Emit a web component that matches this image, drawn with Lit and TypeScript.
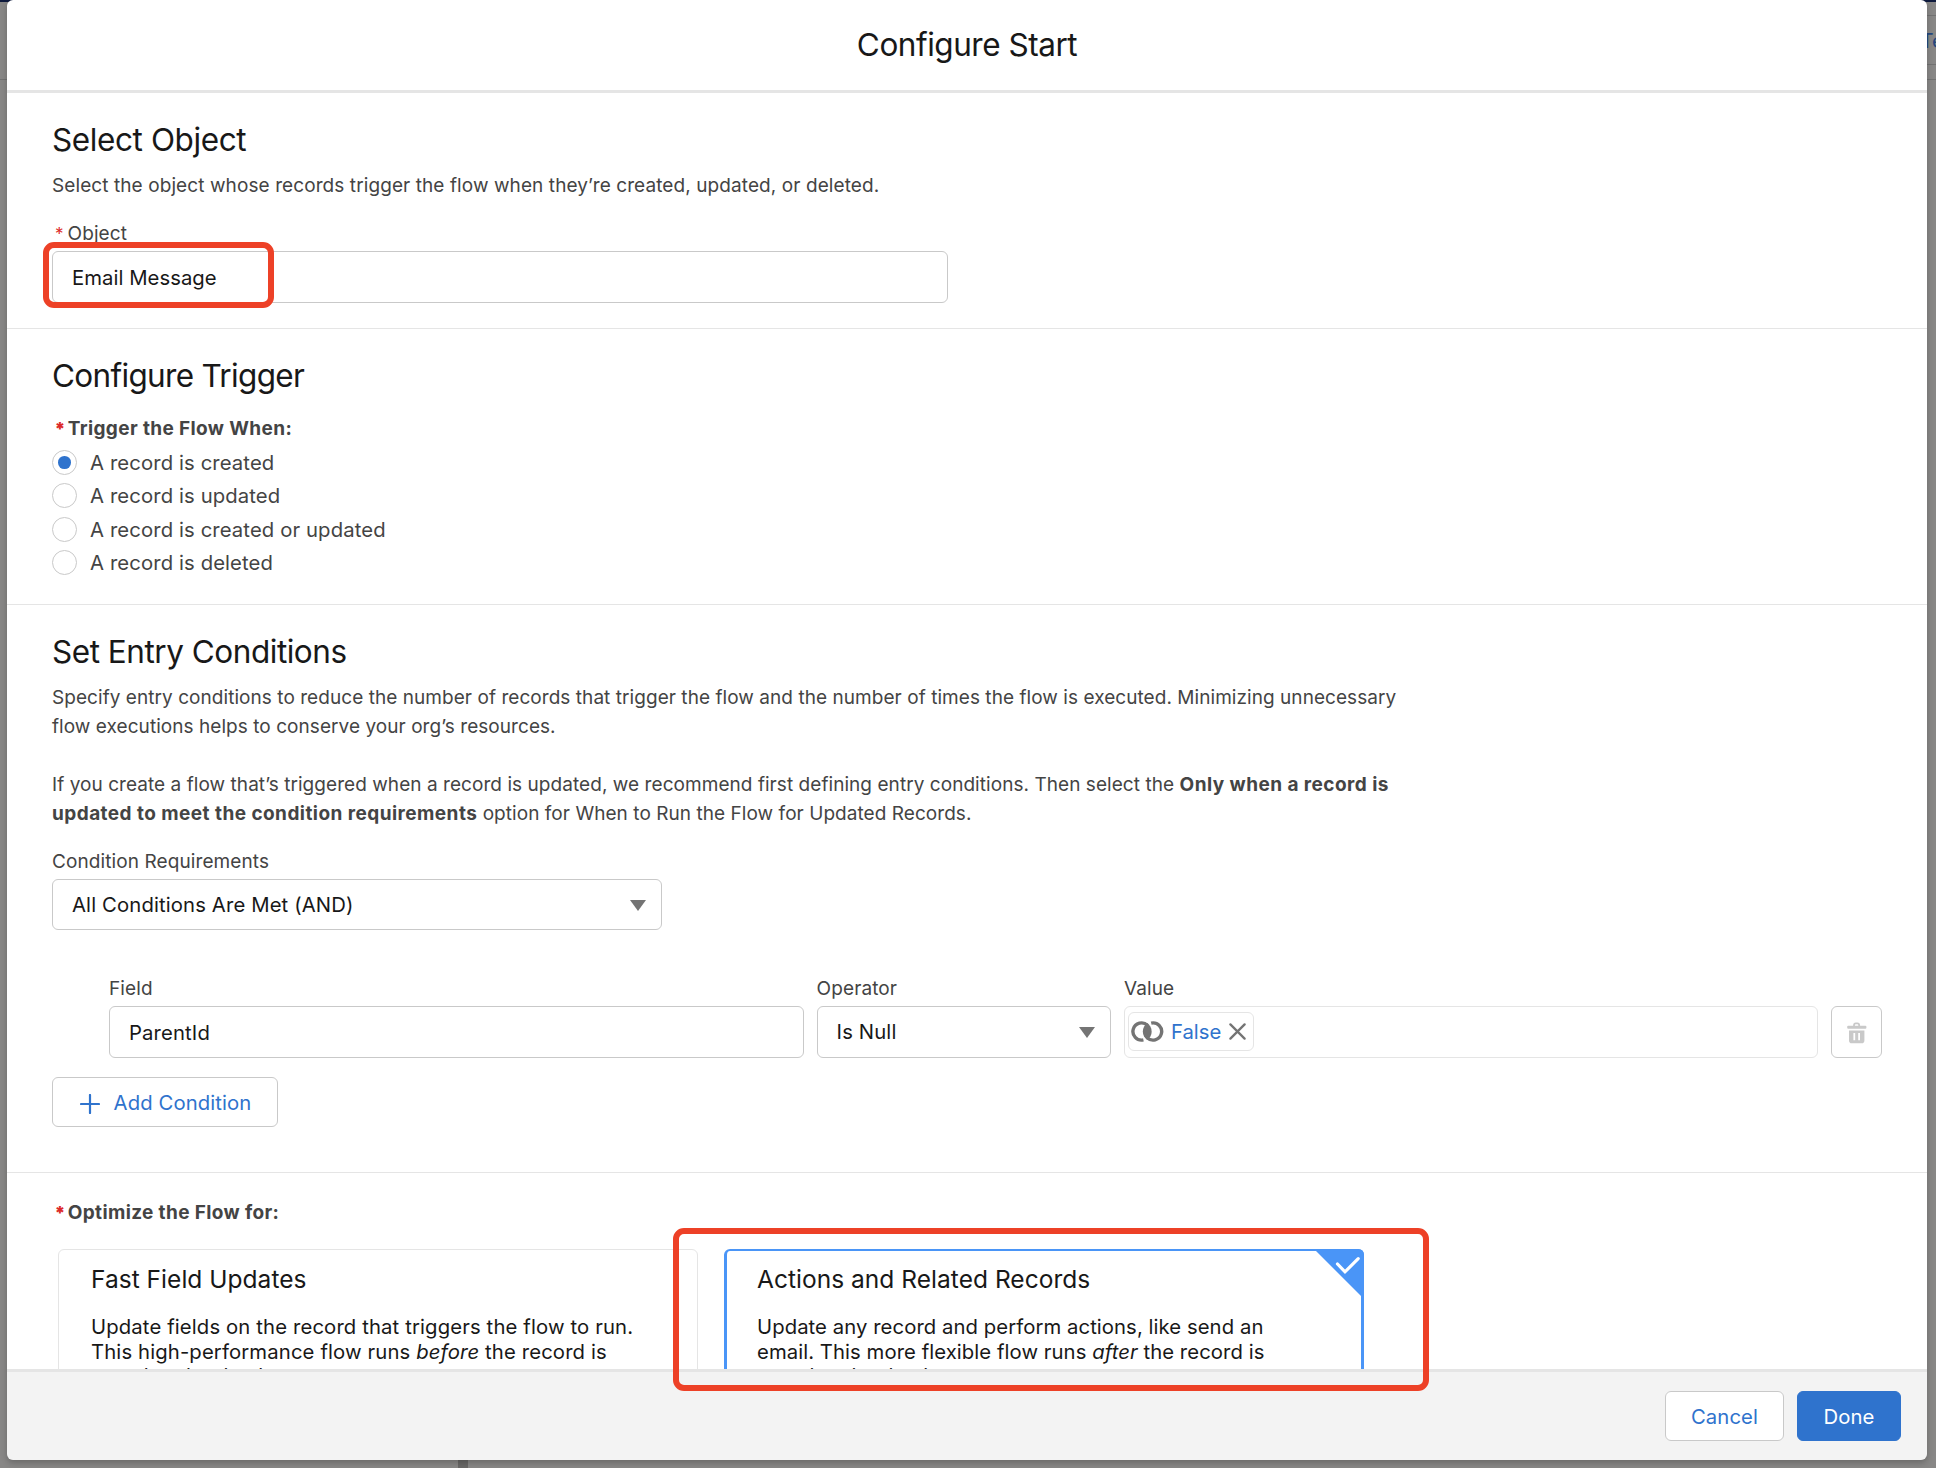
import { LitElement, html, css, nothing } from "lit";
import { customElement, property, state } from "lit/decorators.js";
import { classMap } from "lit/directives/class-map.js";

const caret = html`<svg class="caret" width="16" height="11" viewBox="0 0 16 11">
  <path d="M0 0H16L8 11Z" fill="#747474" />
</svg>`;

const linkIcon = html`<svg width="33" height="21" viewBox="0 0 33 21">
  <path d="M12.4 18.9A8.6 8.6 0 1 1 16.6 4.4" fill="none" stroke="#747474" stroke-width="3.4" />
  <path d="M20.2 2.1A8.6 8.6 0 1 1 16 16.6" fill="none" stroke="#747474" stroke-width="3.4" />
  <path d="M16.25 2.1A10.2 10.2 0 0 1 16.25 18.9A10.2 10.2 0 0 1 16.25 2.1Z" fill="#747474" />
</svg>`;

const closeIcon = html`<svg width="17" height="17" viewBox="0 0 17 17">
  <path d="M1.4 1.4L15.6 15.6M15.6 1.4L1.4 15.6" stroke="#747474" stroke-width="2.3" stroke-linecap="round" />
</svg>`;

const plusIcon = html`<svg width="20" height="20" viewBox="0 0 20 20">
  <path d="M10 1V19M1 10H19" stroke="#2f73cd" stroke-width="2.2" stroke-linecap="round" />
</svg>`;

const trashIcon = html`<svg width="20" height="22" viewBox="0 0 20 22">
  <path d="M7 5V3.4Q7 1.3 8.8 1.3H10.4Q12.2 1.3 12.2 3.4V5" fill="none" stroke="#c9c9c9" stroke-width="1.8" />
  <rect x="0.2" y="3.8" width="19.2" height="3" rx="1" fill="#c9c9c9" />
  <path fill-rule="evenodd" fill="#c9c9c9"
    d="M2 8.4H17.4V18.4Q17.4 21.2 14.6 21.2H4.8Q2 21.2 2 18.4ZM6.4 11V18.2H8.2V11ZM11.2 11V18.2H13V11Z" />
</svg>`;

const checkCorner = html`<svg class="corner" width="50" height="50" viewBox="0 0 50 50">
  <path d="M0 0H44Q50 0 50 6V50Z" fill="#4a95f7" />
  <path d="M23.5 15L31 22.8L44.2 9.6" fill="none" stroke="#fff" stroke-width="3.2" stroke-linecap="round" />
</svg>`;

@customElement("trigger-option")
class TriggerOption extends LitElement {
  @property() label = "";
  @property({ type: Boolean }) checked = false;

  static styles = css`
    :host { display: flex; align-items: center; height: 33.25px; }
    .dot {
      box-sizing: border-box; width: 25px; height: 25px; border: 1px solid #c9c9c9;
      border-radius: 50%; background: #fff; display: grid; place-items: center;
    }
    .fill { width: 12.6px; height: 12.6px; border-radius: 50%; background: #2f73cd; }
    .label { margin-left: 13px; font-size: 20.3px; line-height: 33px; letter-spacing: 0.11px; color: #444; }
  `;

  render() {
    return html`<span class="dot">${this.checked ? html`<span class="fill"></span>` : nothing}</span>
      <span class="label">${this.label}</span>`;
  }
}

@customElement("optimize-card")
class OptimizeCard extends LitElement {
  @property() heading = "";
  @property({ type: Boolean }) selected = false;

  static styles = css`
    :host { display: block; }
    .card {
      box-sizing: border-box; position: relative; width: 640px; height: 190px;
      padding: 14px 30px 0 32px; border: 1px solid #e5e5e5; border-radius: 6px; background: #fff;
    }
    .card.selected { border: 3px solid #4a95f7; border-top-width: 2px; padding: 13px 30px 0; }
    .heading { font-size: 24.5px; line-height: 30px; letter-spacing: 0.03px; color: #181818; }
    .text {
      margin-top: 21.4px; font-size: 20.3px; line-height: 24.5px; letter-spacing: 0.13px;
      color: #181818; white-space: nowrap;
    }
    .selected .text { letter-spacing: 0.07px; }
    .corner { position: absolute; top: -2px; right: -3px; }
  `;

  render() {
    return html`<div class=${classMap({ card: true, selected: this.selected })}>
      <div class="heading">${this.heading}</div>
      <div class="text"><slot></slot></div>
      ${this.selected ? checkCorner : nothing}
    </div>`;
  }
}

@customElement("app-root")
class AppRoot extends LitElement {
  @state() private trigger = 0;

  private options = [
    "A record is created",
    "A record is updated",
    "A record is created or updated",
    "A record is deleted",
  ];

  static styles = css`
    :host {
      display: block; position: relative; width: 1936px; height: 1468px; overflow: hidden;
      font-family: Inter, "Liberation Sans", sans-serif; color: #181818; background: #888786;
    }
    * { box-sizing: border-box; }
    .backdrop { position: absolute; inset: 0; }
    .nav { height: 2px; background: #0e1a3d; }
    .rule { position: absolute; height: 1px; background: #727272; }
    .rule.left { left: 0; top: 79px; width: 7px; }
    .rule.a { right: 0; top: 15px; width: 9px; }
    .rule.b { right: 0; top: 64px; width: 9px; }
    .rule.c { right: 0; top: 79px; width: 9px; }
    .behind { position: absolute; left: 1920.5px; top: 29px; font-size: 20.3px; line-height: 24px; color: #25477e; }
    .divider { position: absolute; left: 458px; bottom: 0; width: 10px; height: 10px; background: #686766; }

    .modal {
      position: relative; display: flex; flex-direction: column; width: 1920px; height: 1460px;
      margin-left: 7px; border-radius: 6px; box-shadow: 0 3px 6px rgba(0, 0, 0, 0.22);
    }
    .header {
      flex: none; height: 93px; border-bottom: 3px solid #e5e5e5; border-radius: 6px 6px 0 0; background: #fff;
      display: flex; align-items: center; justify-content: center;
    }
    .title, .heading { font-size: 31.5px; line-height: 40px; letter-spacing: -0.47px; font-weight: 400; margin: 0; }
    .body { flex: 1; min-height: 0; overflow: hidden; background: #fff; }
    .footer {
      flex: none; height: 91px; border-top: 3px solid #e5e5e5; border-radius: 0 0 6px 6px; background: #f3f3f3;
      display: flex; align-items: flex-start; justify-content: flex-end; gap: 13px; padding: 19px 26px 0 0;
    }

    .section { padding: 0 45px; border-bottom: 1px solid #e5e5e5; }
    .object { height: 236px; padding-top: 27px; }
    .configure { height: 276px; padding-top: 27px; }
    .entry { height: 568px; padding-top: 27px; }
    .optimize { padding-top: 28px; border: 0; }
    .object .heading { letter-spacing: -0.4px; }
    .configure .heading { letter-spacing: -0.68px; }

    .desc { margin: 0; font-size: 19px; line-height: 29px; letter-spacing: 0.055px; color: #444; white-space: nowrap; }
    .desc b { font-weight: 700; letter-spacing: 0.45px; }
    .label { font-size: 19px; line-height: 24px; letter-spacing: 0.1px; color: #444; }
    .strong { font-weight: 700; letter-spacing: 0.37px; }
    .req { color: #dc2a2a; margin: 0 4px 0 3px; font-size: 17px; letter-spacing: 0; }
    .strong .req { margin: 0 2.4px 0 2.4px; font-size: 18px; font-weight: 900; }

    .input {
      display: flex; align-items: center; justify-content: space-between; height: 52px; padding: 0 15px 0 19px;
      border: 1px solid #c9c9c9; border-radius: 6px; background: #fff;
      font-size: 20.3px; letter-spacing: 0.13px; white-space: nowrap;
    }
    .caret { position: relative; top: 1px; }
    .object .desc { margin-top: 11px; letter-spacing: 0.09px; }
    .object .label { margin-top: 22px; }
    .object .input { width: 896px; margin-top: 5px; letter-spacing: 0.05px; }
    .configure .label { margin-top: 21px; margin-bottom: 5px; }
    .entry .desc { margin-top: 11px; }
    .entry .desc + .desc { margin-top: 29px; }
    .requirements { margin-top: 22px; }
    .requirements .input { width: 610px; margin-top: 5px; height: 51px; }

    .row { display: flex; align-items: flex-end; gap: 13px; margin: 47px 0 0 57px; }
    .row .label { margin-bottom: 5px; }
    .field { width: 695px; }
    .operator { width: 294.5px; }
    .value { width: 694.5px; }
    .operator .input { padding-bottom: 1px; }
    .value .input { border-color: #e5e5e5; padding: 0 3px; justify-content: flex-start; }
    .pill {
      display: flex; align-items: center; height: 39px; width: 126px; padding-left: 2px; margin-top: -2px;
      border: 1px solid #e5e5e5; border-radius: 6px; color: #2f73cd;
    }
    .pill .name { margin: 0 8px 0 7px; letter-spacing: 0; }
    .trash {
      width: 51px; height: 52px; border: 1px solid #c9c9c9; border-radius: 6px;
      display: grid; place-items: center; padding-top: 2px;
    }
    .add, .cancel, .done {
      display: flex; align-items: center; justify-content: center; height: 50px; border: 1px solid #c9c9c9;
      border-radius: 6px; background: #fff; color: #2f73cd; font-size: 20.3px; letter-spacing: 0.1px;
    }
    .add { width: 226px; margin-top: 19px; gap: 14px; padding-left: 1px; }
    .add svg { margin-top: 3px; }
    .cancel { width: 119px; }
    .done { width: 104px; background: #2f73cd; border-color: #2f73cd; color: #fff; }

    .cards { display: flex; gap: 26px; margin: 24px 0 0 6px; }

    .mark { position: absolute; border: 6px solid #ed4127; }
    .mark.email { left: 43px; top: 242px; width: 231px; height: 66px; border-radius: 11px; }
    .mark.actions { left: 673px; top: 1228px; width: 756px; height: 163px; border-radius: 11px; }
  `;

  private req() {
    return html`<span class="req">*</span>`;
  }

  render() {
    return html`
      <div class="backdrop">
        <div class="nav"></div>
        <div class="rule left"></div>
        <div class="rule a"></div>
        <div class="rule b"></div>
        <div class="rule c"></div>
        <div class="behind">Te</div>
        <div class="divider"></div>
      </div>

      <div class="modal">
        <header class="header"><h1 class="title">Configure Start</h1></header>

        <main class="body">
          <section class="section object">
            <h2 class="heading">Select Object</h2>
            <p class="desc">Select the object whose records trigger the flow when they’re created, updated, or deleted.</p>
            <div class="label">${this.req()}Object</div>
            <div class="input">Email Message</div>
          </section>

          <section class="section configure">
            <h2 class="heading">Configure Trigger</h2>
            <div class="label strong">${this.req()}Trigger the Flow When:</div>
            ${this.options.map((label, i) => html`<trigger-option
              .label=${label}
              .checked=${i === this.trigger}
              @click=${() => (this.trigger = i)}
            ></trigger-option>`)}
          </section>

          <section class="section entry">
            <h2 class="heading">Set Entry Conditions</h2>
            <p class="desc">
              Specify entry conditions to reduce the number of records that trigger the flow and the number of times the flow is executed. Minimizing unnecessary<br />
              flow executions helps to conserve your org’s resources.
            </p>
            <p class="desc">
              If you create a flow that’s triggered when a record is updated, we recommend first defining entry conditions. Then select the <b>Only when a record is<br />
              updated to meet the condition requirements</b> option for When to Run the Flow for Updated Records.
            </p>
            <div class="requirements">
              <div class="label">Condition Requirements</div>
              <div class="input">All Conditions Are Met (AND)${caret}</div>
            </div>
            <div class="row">
              <div class="field">
                <div class="label">Field</div>
                <div class="input">ParentId</div>
              </div>
              <div class="operator">
                <div class="label">Operator</div>
                <div class="input">Is Null${caret}</div>
              </div>
              <div class="value">
                <div class="label">Value</div>
                <div class="input">
                  <span class="pill">${linkIcon}<span class="name">False</span>${closeIcon}</span>
                </div>
              </div>
              <div class="trash">${trashIcon}</div>
            </div>
            <div class="add">${plusIcon}Add Condition</div>
          </section>

          <section class="section optimize">
            <div class="label strong">${this.req()}Optimize the Flow for:</div>
            <div class="cards">
              <optimize-card heading="Fast Field Updates">
                Update fields on the record that triggers the flow to run.<br />
                This high-performance flow runs <i>before</i> the record is<br />
                saved to the database.
              </optimize-card>
              <optimize-card heading="Actions and Related Records" selected>
                Update any record and perform actions, like send an<br />
                email. This more flexible flow runs <i>after</i> the record is<br />
                saved to the database.
              </optimize-card>
            </div>
          </section>
        </main>

        <footer class="footer">
          <div class="cancel">Cancel</div>
          <div class="done">Done</div>
        </footer>
      </div>

      <div class="mark email"></div>
      <div class="mark actions"></div>
    `;
  }
}
